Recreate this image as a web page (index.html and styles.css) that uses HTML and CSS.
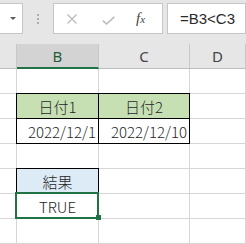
FILE: index.html
```html
<!DOCTYPE html>
<html lang="ja">
<head>
<meta charset="utf-8">
<link rel="stylesheet" href="styles.css">
</head>
<body>
<div class="app">
  <div class="fbar">
    <div class="namebox"><span class="tri"></span></div>
    <div class="grip"><i></i><i></i><i></i></div>
    <div class="icons">
      <svg class="ic-x" width="10" height="10" viewBox="0 0 10 10"><path d="M0.5 0.5L9.5 9.5M9.5 0.5L0.5 9.5" stroke="#bdbdbd" stroke-width="1.4" fill="none"/></svg>
      <svg class="ic-ok" width="13" height="9" viewBox="0 0 13 9"><path d="M0.8 4.6L4.6 8L12.3 0.8" stroke="#bdbdbd" stroke-width="1.6" fill="none"/></svg>
      <span class="fx">f<span class="fx-x">x</span></span>
    </div>
    <div class="formula">=B3&lt;C3</div>
  </div>
  <div class="sheet">
    <div class="hd"></div>
    <div class="hd sel-hd">B</div>
    <div class="hd">C</div>
    <div class="hd">D</div>

    <div class="c"></div><div class="c"></div><div class="c"></div><div class="c"></div>

    <div class="c"></div>
    <div class="c bx green ctr">日付1</div>
    <div class="c bx green ctr">日付2</div>
    <div class="c"></div>

    <div class="c"></div>
    <div class="c bx rt">2022/12/1</div>
    <div class="c bx rt">2022/12/10</div>
    <div class="c"></div>

    <div class="c"></div><div class="c"></div><div class="c"></div><div class="c"></div>

    <div class="c"></div>
    <div class="c bx blue ctr">結果</div>
    <div class="c"></div>
    <div class="c"></div>

    <div class="c"></div>
    <div class="c ctr active">TRUE</div>
    <div class="c"></div>
    <div class="c"></div>

    <div class="c"></div><div class="c"></div><div class="c"></div><div class="c"></div>
  </div>
</div>
</body>
</html>
```

FILE: styles.css
```css
* { box-sizing: border-box; }
html, body { margin: 0; padding: 0; background: #fff; }
.app { width: 246px; height: 244px; overflow: hidden; }

.fbar {
  height: 44px;
  background: #e6e6e6;
  display: flex;
  align-items: flex-start;
  padding-top: 3px;
}
.namebox {
  width: 23px;
  height: 31px;
  background: #fff;
  border: 1px solid #c6c6c6;
  border-left: none;
  position: relative;
  display: flex;
  align-items: center;
  padding-left: 10px;
}
.tri {
  width: 0; height: 0;
  border-left: 3px solid transparent;
  border-right: 3px solid transparent;
  border-top: 3px solid #5a5a5a;
}
.grip {
  margin-left: 14px;
  width: 2px;
  height: 31px;
  display: flex;
  flex-direction: column;
  justify-content: center;
  gap: 2px;
}
.grip i { display: block; width: 2px; height: 2px; background: #adadad; }
.icons {
  margin-left: 14px;
  width: 110px;
  height: 31px;
  background: #fff;
  border: 1px solid #c6c6c6;
  display: flex;
  align-items: center;
  padding-left: 13px;
}
.ic-x { flex: none; }
.ic-ok { flex: none; margin-left: 25px; margin-top: 3px; }
.fx {
  margin-left: 21px;
  font-family: "Liberation Serif", serif;
  font-style: italic;
  font-size: 15px;
  color: #444;
  line-height: 1;
}
.fx-x { font-size: 11px; }
.formula {
  margin-left: 4px;
  width: 79px;
  height: 31px;
  background: #fff;
  border: 1px solid #c6c6c6;
  font-family: "Liberation Sans", sans-serif;
  font-size: 15px;
  color: #2a2a2a;
  display: flex;
  align-items: center;
  padding-left: 12px;
}

.sheet {
  display: grid;
  grid-template-columns: 17px 82px 91px 1fr;
  grid-template-rows: repeat(8, 25px);
}
.hd {
  background: #e6e6e6;
  border-right: 1px solid #c8c8c8;
  border-bottom: 1px solid #bdbdbd;
  font-family: "Noto Sans", sans-serif;
  font-size: 15px;
  color: #444;
  display: flex;
  align-items: center;
  justify-content: center;
}
.sel-hd {
  background: #d3d3d3;
  color: #1f5e3a;
  border-bottom: 2px solid #217346;
}
.c {
  background: #fff;
  border-right: 1px solid #d6d6d6;
  border-bottom: 1px solid #d6d6d6;
  font-family: "Noto Sans CJK JP", sans-serif;
  font-weight: 300;
  font-size: 15px;
  color: #262626;
  display: flex;
  align-items: center;
  white-space: nowrap;
}
.ctr { justify-content: center; }
.rt { justify-content: flex-end; padding-right: 2px; }
.bx {
  border-right-color: #000;
  border-bottom-color: #000;
  box-shadow: -1px 0 0 #000, 0 -1px 0 #000, -1px -1px 0 #000;
}
.green { background: #c6e0b4; }
.blue { background: #ddebf7; }
.active { position: relative; }
.active::after {
  content: "";
  position: absolute;
  left: -2px; top: -2px; right: -1px; bottom: -1px;
  border: 2px solid #217346;
}
.active::before {
  content: "";
  position: absolute;
  right: -3px; bottom: -2px;
  width: 5px; height: 5px;
  background: #217346;
  z-index: 1;
}
```
